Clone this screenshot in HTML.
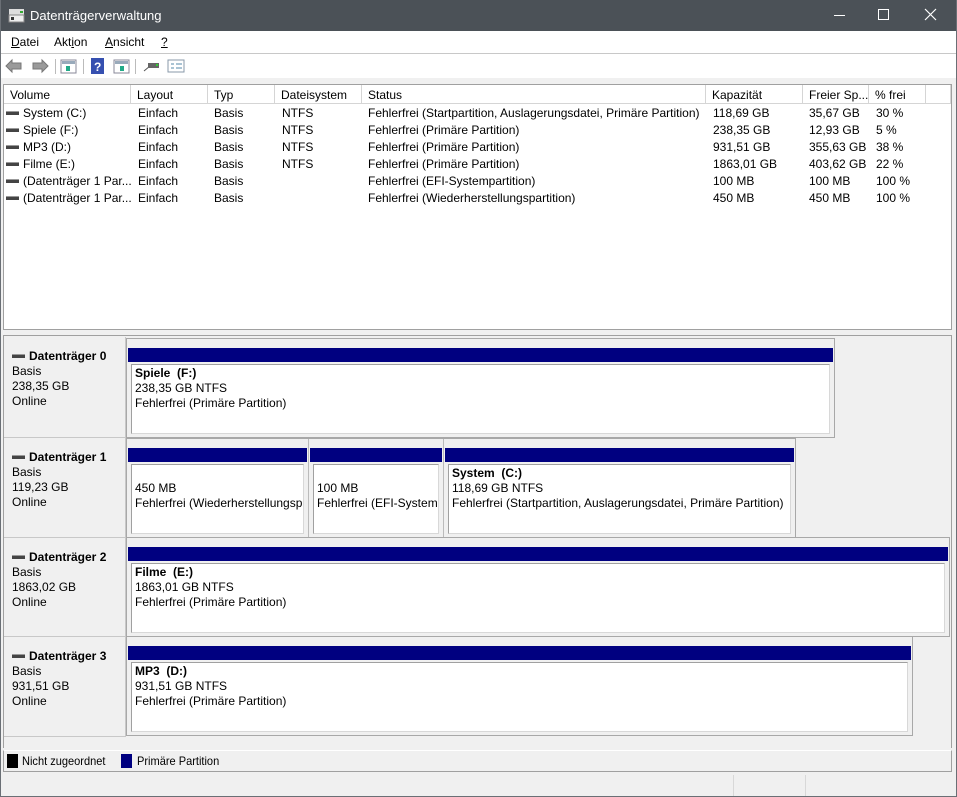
<!DOCTYPE html>
<html><head><meta charset="utf-8"><style>
*{margin:0;padding:0;box-sizing:border-box}
body{width:957px;height:797px;overflow:hidden;background:#f0f0f0;font-family:"Liberation Sans",sans-serif;font-size:12px;color:#000;position:relative}
.a{position:absolute}
.t{position:absolute;white-space:nowrap}
.hdr{position:absolute;top:85px;height:19px;background:#fff;border-right:1px solid #d5d5d5;border-bottom:1px solid #d5d5d5;padding:3px 0 0 6px;white-space:nowrap;overflow:hidden}
.row{position:absolute;left:0;height:17px}
.row span{position:absolute;top:2px;white-space:nowrap}
.di{display:inline-block;width:13px;height:4px;background:#444;border-top:1px solid #999;vertical-align:middle;margin-right:4px;position:relative;top:-1px}
.lab{position:absolute;left:4px;width:122px;background:#f0f0f0;border-bottom:1px solid #c8c8c8;border-right:1px solid #c8c8c8;padding:12px 0 0 8px;line-height:15px}
.lab b{display:block}
.out{position:absolute;border:1px solid #a8a8a8;background:#f0f0f0}
.p{position:absolute;top:0;bottom:0}
.bar{position:absolute;left:1px;right:1px;top:9px;height:14px;background:#000080}
.box{position:absolute;left:4px;right:4px;top:25px;bottom:3px;background:#fff;border:1px solid #a0a0a0;border-right-color:#d8d8d8;border-bottom-color:#d8d8d8;padding:1px 0 0 3px;line-height:15px;overflow:hidden;white-space:nowrap}
</style></head><body>
<div class="a" style="left:0;top:0;width:957px;height:31px;background:#4b5157"></div>
<svg class="a" style="left:8px;top:7px" width="18" height="16"><rect x="1" y="2" width="15" height="6" fill="#ddd"/><rect x="1" y="8" width="15" height="7" fill="#eee" stroke="#888"/><rect x="3" y="10" width="3" height="3" fill="#333"/><rect x="12" y="4" width="3" height="2" fill="#3a3"/></svg>
<div class="t" style="left:30px;top:8px;color:#fff;font-size:13px">Datenträgerverwaltung</div>
<div class="a" style="left:834px;top:15px;width:11px;height:1px;background:#fff"></div>
<div class="a" style="left:878px;top:9px;width:11px;height:11px;border:1px solid #fff"></div>
<svg class="a" style="left:924px;top:8px" width="13" height="13"><path d="M1 1L12 12M12 1L1 12" stroke="#fff" stroke-width="1.2"/></svg>
<div class="a" style="left:1px;top:31px;width:955px;height:47px;background:#fff"></div>
<div class="t" style="left:11px;top:35px"><u>D</u>atei</div>
<div class="t" style="left:54px;top:35px">Akt<u>i</u>on</div>
<div class="t" style="left:105px;top:35px"><u>A</u>nsicht</div>
<div class="t" style="left:161px;top:35px"><u>?</u></div>
<div class="a" style="left:1px;top:53px;width:955px;height:1px;background:#c8c8c8"></div>
<svg class="a" style="left:4px;top:57px" width="190" height="18">
<path d="M2 9L8 3V6H17V12H8V15Z" fill="#9a9a9a" stroke="#777"/>
<path d="M44 9L38 3V6H29V12H38V15Z" fill="#9a9a9a" stroke="#777"/>
<rect x="51" y="2" width="1" height="15" fill="#bbb"/>
<rect x="57" y="3" width="15" height="13" fill="#fff" stroke="#889"/><rect x="58" y="4" width="13" height="3" fill="#9ab"/><rect x="62" y="9" width="4" height="5" fill="#2a8"/>
<rect x="79" y="2" width="1" height="15" fill="#bbb"/>
<rect x="87" y="1" width="13" height="16" fill="#3650b0"/><text x="90" y="14" fill="#fff" font-size="12" font-family="Liberation Sans" font-weight="bold">?</text>
<rect x="110" y="3" width="15" height="13" fill="#fff" stroke="#889"/><rect x="111" y="4" width="13" height="3" fill="#9ab"/><rect x="116" y="9" width="4" height="5" fill="#2a8"/>
<rect x="131" y="2" width="1" height="15" fill="#bbb"/>
<path d="M140 14L146 9" stroke="#555"/><rect x="144" y="6" width="11" height="5" fill="#666"/><rect x="152" y="7" width="2" height="2" fill="#3c3"/>
<rect x="164" y="3" width="16" height="12" fill="#fff" stroke="#8899aa"/><path d="M167 7H170M172 7H178M167 11H170M172 11H178" stroke="#58a"/>
</svg>
<div class="a" style="left:3px;top:84px;width:949px;height:246px;background:#fff;border:1px solid #a0a0a0"></div>
<div class="hdr" style="left:4px;width:127px">Volume</div>
<div class="hdr" style="left:131px;width:77px">Layout</div>
<div class="hdr" style="left:208px;width:67px">Typ</div>
<div class="hdr" style="left:275px;width:87px">Dateisystem</div>
<div class="hdr" style="left:362px;width:344px">Status</div>
<div class="hdr" style="left:706px;width:97px">Kapazität</div>
<div class="hdr" style="left:803px;width:66px">Freier Sp...</div>
<div class="hdr" style="left:869px;width:57px">% frei</div>
<div class="hdr" style="left:926px;width:25px"></div>
<div class="row" style="top:104px"><span style="left:6px"><i class="di"></i>System (C:)</span><span style="left:138px">Einfach</span><span style="left:214px">Basis</span><span style="left:282px">NTFS</span><span style="left:368px">Fehlerfrei (Startpartition, Auslagerungsdatei, Primäre Partition)</span><span style="left:713px">118,69 GB</span><span style="left:809px">35,67 GB</span><span style="left:876px">30 %</span></div>
<div class="row" style="top:121px"><span style="left:6px"><i class="di"></i>Spiele (F:)</span><span style="left:138px">Einfach</span><span style="left:214px">Basis</span><span style="left:282px">NTFS</span><span style="left:368px">Fehlerfrei (Primäre Partition)</span><span style="left:713px">238,35 GB</span><span style="left:809px">12,93 GB</span><span style="left:876px">5 %</span></div>
<div class="row" style="top:138px"><span style="left:6px"><i class="di"></i>MP3 (D:)</span><span style="left:138px">Einfach</span><span style="left:214px">Basis</span><span style="left:282px">NTFS</span><span style="left:368px">Fehlerfrei (Primäre Partition)</span><span style="left:713px">931,51 GB</span><span style="left:809px">355,63 GB</span><span style="left:876px">38 %</span></div>
<div class="row" style="top:155px"><span style="left:6px"><i class="di"></i>Filme (E:)</span><span style="left:138px">Einfach</span><span style="left:214px">Basis</span><span style="left:282px">NTFS</span><span style="left:368px">Fehlerfrei (Primäre Partition)</span><span style="left:713px">1863,01 GB</span><span style="left:809px">403,62 GB</span><span style="left:876px">22 %</span></div>
<div class="row" style="top:172px"><span style="left:6px"><i class="di"></i>(Datenträger 1 Par...</span><span style="left:138px">Einfach</span><span style="left:214px">Basis</span><span style="left:368px">Fehlerfrei (EFI-Systempartition)</span><span style="left:713px">100 MB</span><span style="left:809px">100 MB</span><span style="left:876px">100 %</span></div>
<div class="row" style="top:189px"><span style="left:6px"><i class="di"></i>(Datenträger 1 Par...</span><span style="left:138px">Einfach</span><span style="left:214px">Basis</span><span style="left:368px">Fehlerfrei (Wiederherstellungspartition)</span><span style="left:713px">450 MB</span><span style="left:809px">450 MB</span><span style="left:876px">100 %</span></div>
<div class="a" style="left:3px;top:335px;width:949px;height:413px;border-top:1px solid #a0a0a0;border-left:1px solid #a0a0a0;border-right:1px solid #a0a0a0"></div>
<div class="lab" style="top:337px;height:101px"><b><i class="di"></i>Datenträger 0</b>Basis<br>238,35 GB<br>Online</div>
<div class="lab" style="top:438px;height:100px"><b><i class="di"></i>Datenträger 1</b>Basis<br>119,23 GB<br>Online</div>
<div class="lab" style="top:538px;height:99px"><b><i class="di"></i>Datenträger 2</b>Basis<br>1863,02 GB<br>Online</div>
<div class="lab" style="top:637px;height:100px"><b><i class="di"></i>Datenträger 3</b>Basis<br>931,51 GB<br>Online</div>
<div class="out" style="left:126px;top:338px;width:709px;height:100px"><div class="p" style="left:0;right:0"><div class="bar"></div><div class="box"><b>Spiele&nbsp; (F:)</b><br>238,35 GB NTFS<br>Fehlerfrei (Primäre Partition)</div></div></div>
<div class="out" style="left:126px;top:438px;width:670px;height:100px">
<div class="p" style="left:0;width:181px"><div class="bar"></div><div class="box" style="padding-top:16px">450 MB<br>Fehlerfrei (Wiederherstellungsp</div></div>
<div class="p" style="left:181px;width:135px;border-left:1px solid #bbb"><div class="bar"></div><div class="box" style="padding-top:16px">100 MB<br>Fehlerfrei (EFI-Systemp</div></div>
<div class="p" style="left:316px;right:0;border-left:1px solid #bbb"><div class="bar"></div><div class="box"><b>System&nbsp; (C:)</b><br>118,69 GB NTFS<br>Fehlerfrei (Startpartition, Auslagerungsdatei, Primäre Partition)</div></div>
</div>
<div class="out" style="left:126px;top:537px;width:824px;height:100px"><div class="p" style="left:0;right:0"><div class="bar"></div><div class="box"><b>Filme&nbsp; (E:)</b><br>1863,01 GB NTFS<br>Fehlerfrei (Primäre Partition)</div></div></div>
<div class="out" style="left:126px;top:636px;width:787px;height:100px"><div class="p" style="left:0;right:0"><div class="bar"></div><div class="box"><b>MP3&nbsp; (D:)</b><br>931,51 GB NTFS<br>Fehlerfrei (Primäre Partition)</div></div></div>
<div class="a" style="left:3px;top:750px;width:949px;height:22px;border-top:1px solid #fff;border-bottom:1px solid #a0a0a0;border-left:1px solid #a0a0a0;border-right:1px solid #a0a0a0"></div>
<div class="a" style="left:7px;top:754px;width:11px;height:14px;background:#000"></div>
<div class="t" style="left:22px;top:754px;transform:scaleX(.92);transform-origin:left">Nicht zugeordnet</div>
<div class="a" style="left:121px;top:754px;width:11px;height:14px;background:#000080"></div>
<div class="t" style="left:137px;top:754px;transform:scaleX(.92);transform-origin:left">Primäre Partition</div>
<div class="a" style="left:733px;top:775px;width:1px;height:21px;background:#d8d8d8"></div>
<div class="a" style="left:805px;top:775px;width:1px;height:21px;background:#d8d8d8"></div>
<div class="a" style="left:0;top:0;width:957px;height:797px;border:1px solid #6a6f75;border-top:none"></div>
</body></html>
